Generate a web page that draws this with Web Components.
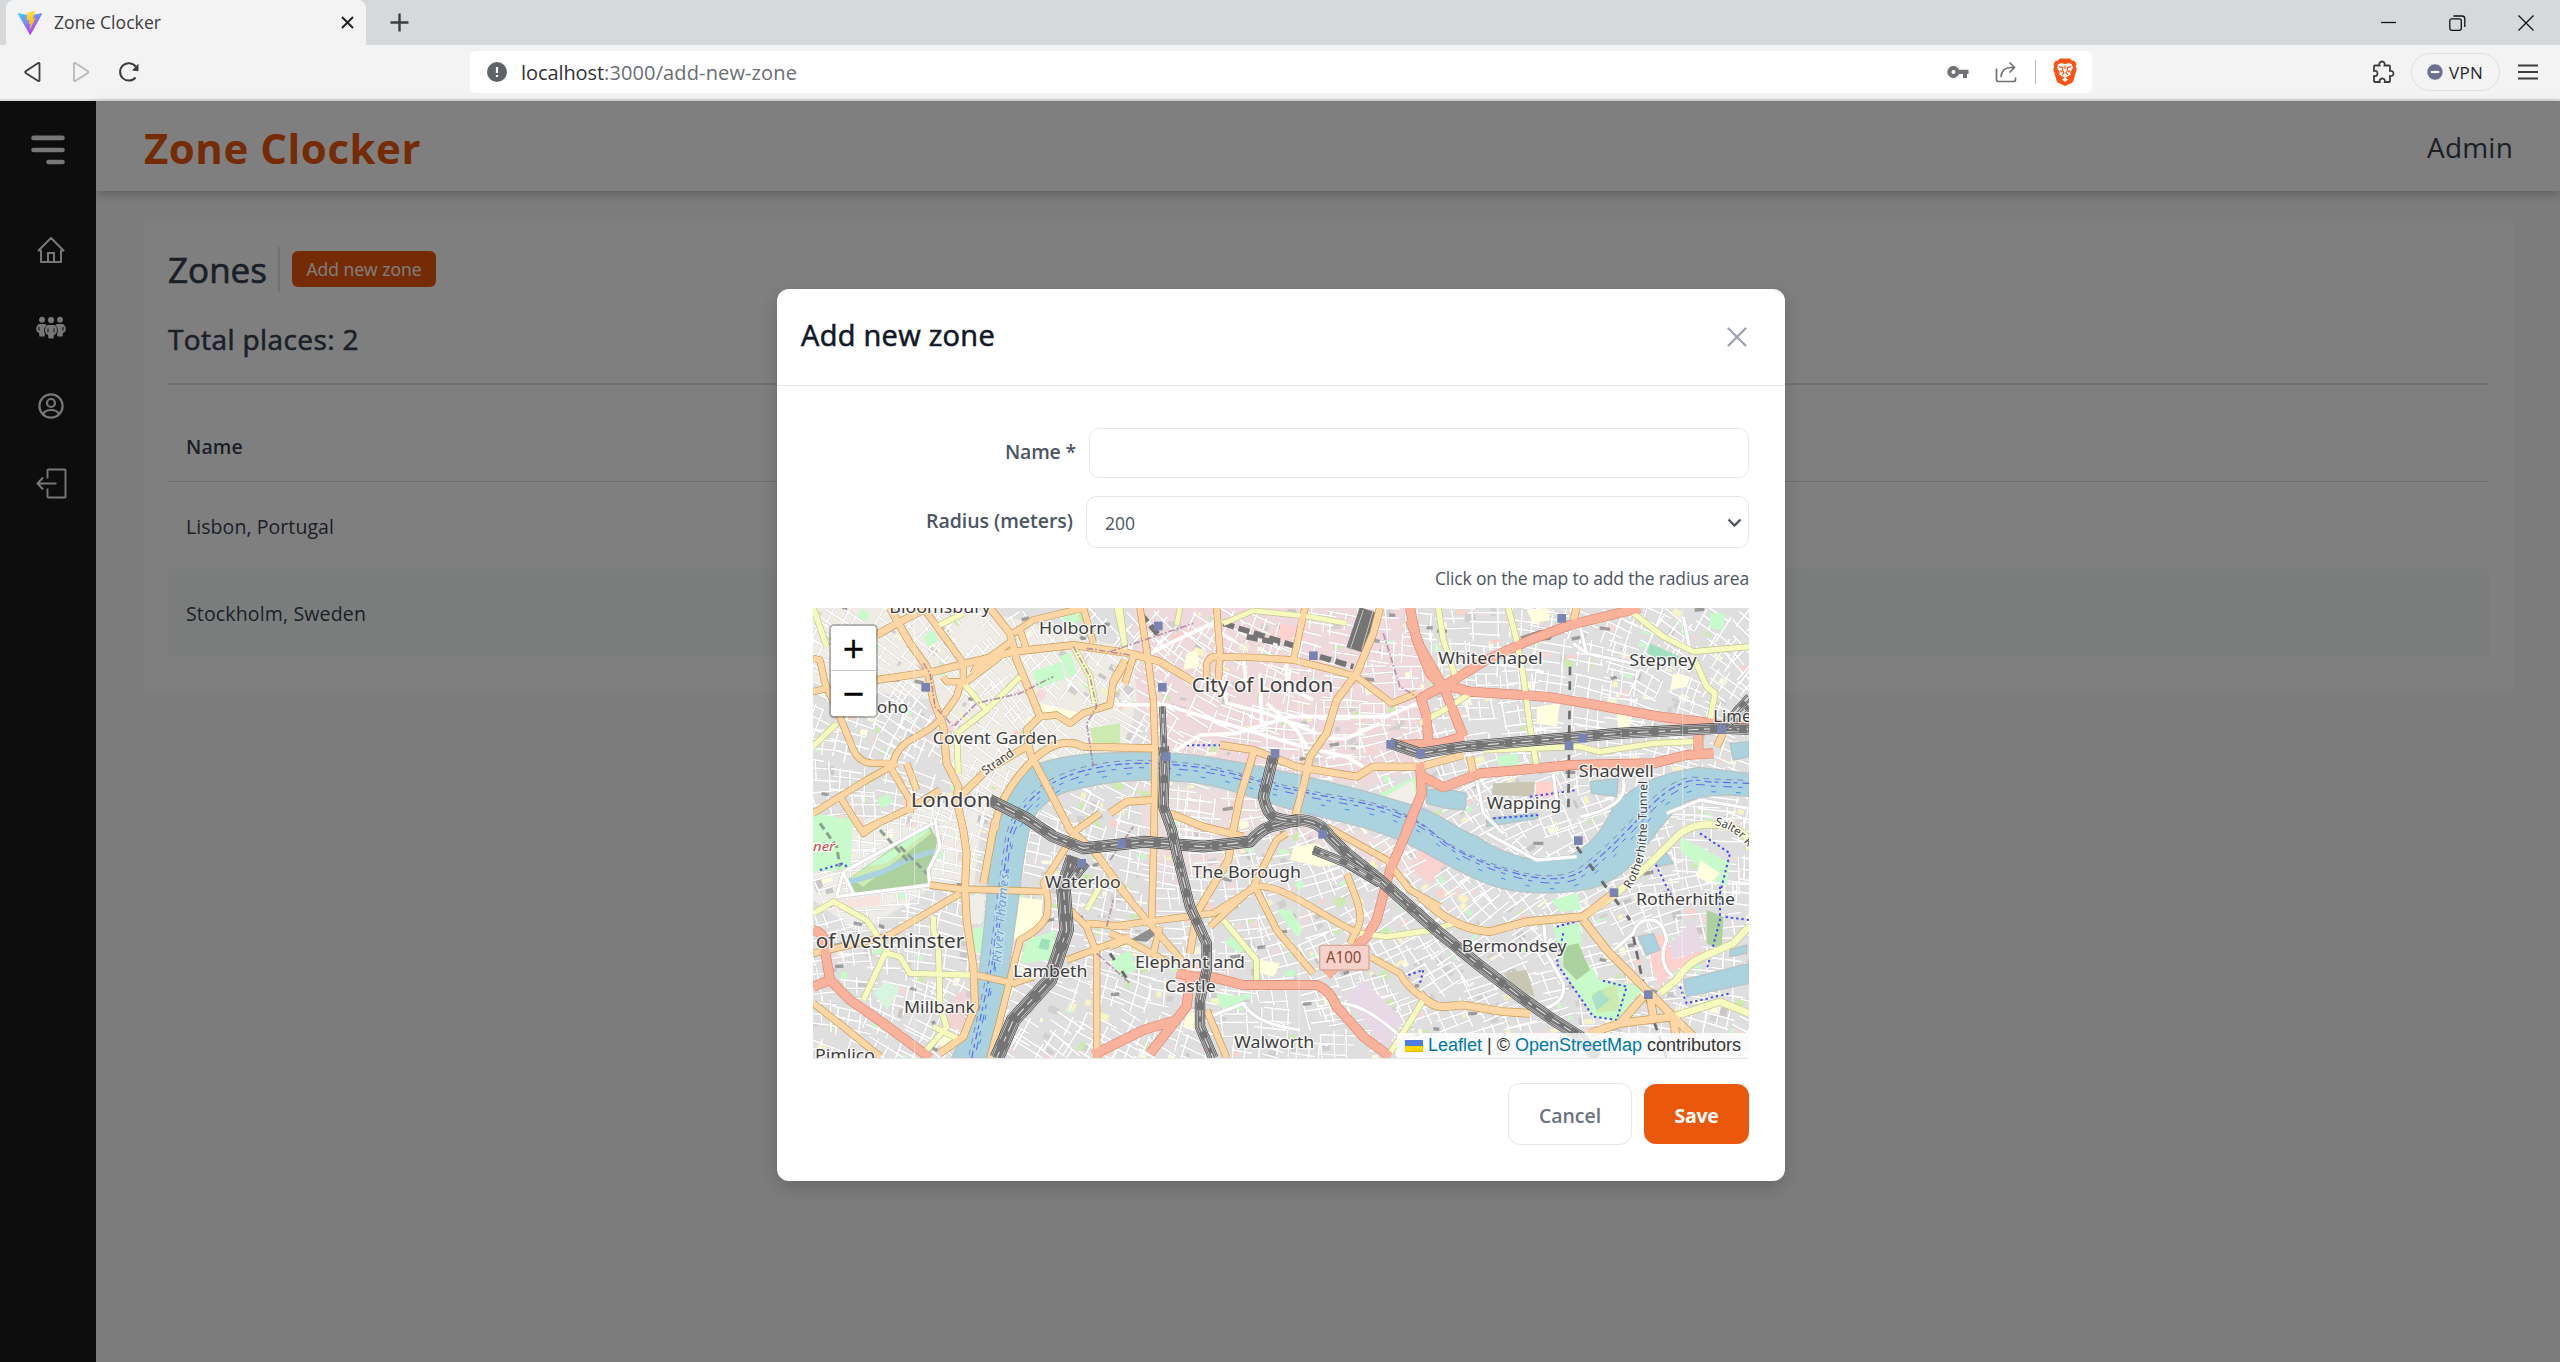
<!DOCTYPE html>
<html lang="en">
<head>
<meta charset="utf-8">
<title>Zone Clocker</title>
<style>
html,body{margin:0;height:100%;overflow:hidden}
body{font-family:"Open Sans","Noto Sans",sans-serif}
</style>
</head>
<body>
<zone-app></zone-app>
<script>
function define(name, html, setup) {
  const t = document.createElement('template');
  t.innerHTML = html;
  customElements.define(name, class extends HTMLElement {
    constructor() {
      super();
      this.attachShadow({mode: 'open'}).appendChild(t.content.cloneNode(true));
    }
    connectedCallback() { if (setup) setup.call(this); }
  });
}

/* Inline text that tracks its letters so the run takes exactly w pixels. */
const runs = [];
customElements.define('fit-text', class extends HTMLElement {
  connectedCallback() {
    if (this.shadowRoot) return;
    this.attachShadow({mode: 'open'}).innerHTML =
      '<style>:host{display:inline-block;white-space:pre;flex:none}</style><slot></slot>';
    runs.push(this);
  }
  fit() {
    const w = +this.getAttribute('w'), n = this.textContent.length;
    const d = (w - this.getBoundingClientRect().width) / n;
    this.style.letterSpacing = d.toFixed(3) + 'px';
    this.style.width = w + 'px';
  }
});

/* Icons: [width, height, markup], stroked or filled with currentColor */
const ICONS = {
  vite: [26, 26, '<defs><linearGradient id="a" x1="0" y1="0" x2=".6" y2="1"><stop offset="0" stop-color="#41d1ff"/><stop offset="1" stop-color="#bd34fe"/></linearGradient><linearGradient id="b" x1=".4" y1="0" x2=".6" y2="1"><stop offset="0" stop-color="#ffea83"/><stop offset=".1" stop-color="#ffdd35"/><stop offset="1" stop-color="#ffa800"/></linearGradient></defs><path d="M25 4.3 13.7 24.4q-.5.8-1 0L1 4.300q-.4-1 .7-1l11.400 2L24.300 3.300q1 0 .7 1z" fill="url(#a)"/><path d="m18.200.8-8 1.600-.5 8.200 2.600-.5-.7 4 2-.6-1.200 6 .8-.2 5.300-11-2.600.4z" fill="url(#b)"/>'],
  x: [13, 13, '<path d="m1 1 11 11M12 1 1 12" fill="none" stroke="currentColor" stroke-width="2"/>'],
  plus: [19, 19, '<path d="M9.500.5v18M.5 9.500h18" fill="none" stroke="currentColor" stroke-width="2.400"/>'],
  back: [18, 22, '<path d="M15.500 2.500v17q-.3 1-1.300.4L1.700 12q-1-.9 0-1.800L14.200 2q1-.5 1.300.5z" fill="none" stroke="currentColor" stroke-width="1.800"/>'],
  fwd: [18, 22, '<path d="M2 2.500v17q.3 1 1.300.4L15.800 12q1-.9 0-1.800L3.300 2Q2.300 1.500 2 2.500z" fill="none" stroke="currentColor" stroke-width="1.800"/>'],
  reload: [22, 22, '<path d="M17.500 16.500a8.700 8.700 0 1 1 .3-10.800" fill="none" stroke="currentColor" stroke-width="2"/><path d="M20.500 2.500v7q0 .8-.8.8L14 9.500z" fill="currentColor"/>'],
  info: [20, 20, '<circle cx="10" cy="10" r="10" fill="#5f6368"/><path d="M10 5v6M10 13v2" stroke="#fff" stroke-width="2.200"/>'],
  key: [22, 14, '<path fill-rule="evenodd" d="M6.500 1a6 6 0 1 0 5.400 8H16v4h4V9h1.500V4.800H11.900A6 6 0 0 0 6.500 1zm0 4a2 2 0 1 1 0 4 2 2 0 0 1 0-4z" fill="currentColor"/>'],
  share: [22, 22, '<path d="M1.500 7.500v11q0 2 2 2h15q2 0 2-2v-2" fill="none" stroke="currentColor" stroke-width="1.700"/><path d="M6 16c.5-6 4-9.500 10-9.500h3M14.500 1.500l5 5-5 5" fill="none" stroke="currentColor" stroke-width="1.700"/>'],
  brave: [24, 28, '<path d="M7 .5h10l2.200 2.300 2-.3L23.500 6l-.8 2 1 3-3.200 11.500q-.5 1.600-2 2.600L12 28l-6.500-2.900q-1.500-1-2-2.600L.3 11l1-3-.8-2 2.300-3.500 2 .3z" fill="#fb5414"/><path d="M12 6.200 15.500 5l3 1 1.500 3.500-2.700 4.800.4 2.200-4 2.500-1.700 1.300-1.700-1.300-4-2.500.4-2.200L4 9.500 5.500 6l3-1z" fill="#fff"/><path d="m6 8.700 3.800.9L9.500 12l1.500 3-2 1.800M18 8.700l-3.800.9.3 2.400-1.500 3 2 1.800M12 7.500V11M7 12.500l2 1.500M17 12.500 15 14" fill="none" stroke="#fb5414" stroke-width="1.200"/><path d="m9 21.500 3-1.700 3 1.700-3 2.500z" fill="#fff"/>'],
  puzzle: [24, 24, '<path d="M4 5.500h4.500c-.5-1.500 0-4 2.500-4s3 2.500 2.500 4H18q1 0 1 1v4.500c1.500-.5 3.500.2 3.500 2.500S20.500 16.500 19 16v5q0 1-1 1h-4.200c.5-1.700-.3-3.500-2.500-3.500S8.200 20.300 8.700 22H4q-1 0-1-1v-5c2 .4 3.500-.4 3.500-2.600S5 10.500 3 11V6.500q0-1 1-1z" fill="none" stroke="currentColor" stroke-width="1.800"/>'],
  vpn: [16, 16, '<circle cx="8" cy="8" r="7.700" fill="#6b7090"/><path d="M3.800 8h8.400" stroke="#fff" stroke-width="2.200"/>'],
  menu: [22, 16, '<path d="M1 1.500h20M1 8h20M1 14.500h20" stroke="currentColor" stroke-width="1.800"/>'],
  min: [16, 16, '<path d="M0 7.500h15" stroke="currentColor" stroke-width="1.300"/>'],
  restore: [17, 16, '<rect x=".8" y="3.800" width="11.500" height="11.500" rx="2" fill="none" stroke="currentColor" stroke-width="1.300"/><path d="M4.500 1h8.500q2.800 0 2.800 2.800V12" fill="none" stroke="currentColor" stroke-width="1.300"/>'],
  winx: [16, 16, '<path d="m.5.5 15 15m0-15-15 15" stroke="currentColor" stroke-width="1.300"/>'],
  burger: [34, 30, '<path d="M2.500 2.900h29M2.500 15h29M17.500 27h14" stroke="currentColor" stroke-width="4.600" stroke-linecap="round"/>'],
  home: [28, 28, '<path d="M1.500 14.500 14 2l12.500 12.500H24V26H4V14.500z" fill="none" stroke="currentColor" stroke-width="2" stroke-linejoin="round"/><path d="M11 26v-9h6v9" fill="none" stroke="currentColor" stroke-width="2"/>'],
  people: [30, 24, '<g fill="currentColor"><circle cx="6" cy="3.700" r="2.900"/><circle cx="24" cy="3.700" r="2.900"/><path d="M3 8h6q1.500.5 1.700 1.500C8 11 7.500 15 9 18l-.5 2.500H3.500L3 17Q0 16 .2 12.500T3 8zM27 8h-6q-1.500.5-1.700 1.500C22 11 22.500 15 21 18l.5 2.500h5L27 17q3-1 2.800-4.500T27 8z"/><circle cx="15" cy="4" r="3.100"/><path d="M12 9h6q3 1 3 5t-3 5l-.5 3.500h-5L12 19q-3-1-3-5t3-5z"/></g><path d="M3 11v3.500M27 11v3.500M12 12.500v4M18 12.500v4" stroke="#1a1a1a" stroke-width="1"/>'],
  user: [26, 26, '<g fill="none" stroke="currentColor" stroke-width="2.200"><circle cx="13" cy="13" r="11.600"/><circle cx="13" cy="10" r="4"/><path d="M5 21q2-4 8-4t8 4"/></g>'],
  exit: [31, 31, '<g fill="none" stroke="currentColor" stroke-width="1.900"><path d="M11.500 10.500V2.500q0-1 1-1h16q1 0 1 1v26q0 1-1 1h-16q-1 0-1-1v-8M20.500 15.500H1.500M7 9.500l-5.500 6 5.500 6"/></g>'],
  close: [20, 20, '<path d="m1.500 1.500 17 17m0-17-17 17" stroke="currentColor" stroke-width="2.300" stroke-linecap="round"/>'],
  chevron: [15, 10, '<path d="m1.500 1.500 6 6 6-6" fill="none" stroke="currentColor" stroke-width="2.400"/>'],
  flag: [18, 12, '<path d="M0 0h18v6H0z" fill="#4c7be1"/><path d="M0 6h18v6H0z" fill="#ffd500"/><path d="M0 11h18v1H0z" fill="#e0bc00"/>']
};
customElements.define('ui-icon', class extends HTMLElement {
  connectedCallback() {
    if (this.shadowRoot) return;
    const [w, h, m] = ICONS[this.getAttribute('name')];
    this.attachShadow({mode: 'open'}).innerHTML =
      `<style>:host{display:block;flex:none;width:${w}px;height:${h}px}svg{display:block}</style><svg width="${w}" height="${h}" viewBox="0 0 ${w} ${h}">${m}</svg>`;
  }
});

define('browser-chrome', `<style>
:host{display:block;background:#d5d9dc;height:101px;color:#3b3d40;flex:none}
.tabs{display:flex;height:45px;align-items:center}
.tab{display:flex;align-items:center;width:360px;height:45px;margin-left:6px;background:#f3f3f3;border-radius:8px 8px 0 0;box-sizing:border-box;padding:0 12px 0 11px}
.tab fit-text{margin-left:11px;font-size:17.500px;margin-top:-2px}
.tab ui-icon:last-child{margin-left:auto;color:#222}
.win{margin-left:auto;display:flex;gap:52px;padding-right:26px;color:#111}
.bar{display:flex;height:54px;align-items:center;background:#f3f3f3}
.url{display:flex;align-items:center;width:1622px;height:42px;margin-left:330px;background:#fff;border-radius:6px;box-sizing:border-box;padding:0 15px 0 17px}
.url fit-text{font-size:20px;color:#6b6e72}
.url fit-text:first-of-type{color:#303235;margin-left:14px}
.tools{margin-left:auto;display:flex;align-items:center;color:#6f7174}
.sep{width:1px;height:24px;background:#b9bcbf;margin:0 17px 0 18px}
.right{margin-left:auto;display:flex;align-items:center;padding-right:21px}
.vpn{display:flex;align-items:center;box-sizing:border-box;width:89px;height:38px;margin:0 17px 0 16px;border:1px solid #dfdfdf;border-radius:19px;padding-left:15px}
.vpn fit-text{margin-left:6px;font-size:17px;color:#26282b}
</style>
<div class="tabs"><div class="tab"><ui-icon name="vite"></ui-icon><fit-text w="107">Zone Clocker</fit-text><ui-icon name="x"></ui-icon></div>
<ui-icon name="plus" style="margin-left:24px"></ui-icon>
<div class="win"><ui-icon name="min"></ui-icon><ui-icon name="restore"></ui-icon><ui-icon name="winx"></ui-icon></div></div>
<div class="bar"><ui-icon name="back" style="margin-left:24px"></ui-icon><ui-icon name="fwd" style="margin-left:30px;color:#b9b9b9"></ui-icon><ui-icon name="reload" style="margin-left:28px"></ui-icon>
<div class="url"><ui-icon name="info"></ui-icon><fit-text w="83">localhost</fit-text><fit-text w="193">:3000/add-new-zone</fit-text>
<div class="tools"><ui-icon name="key"></ui-icon><ui-icon name="share" style="margin-left:26px"></ui-icon><span class="sep"></span><ui-icon name="brave"></ui-icon></div></div>
<div class="right"><ui-icon name="puzzle"></ui-icon><div class="vpn"><ui-icon name="vpn"></ui-icon><fit-text w="34">VPN</fit-text></div><ui-icon name="menu"></ui-icon></div></div>`);

define('side-nav', `<style>
:host{display:flex;flex-direction:column;width:96px;flex:none;background:#1a1a1a;color:#eee;box-sizing:border-box;padding-top:34px;align-items:center}
nav{display:flex;flex-direction:column;align-items:center;padding:71px 0 0 6px}
</style><ui-icon name="burger"></ui-icon><nav><ui-icon name="home"></ui-icon><ui-icon name="people" style="margin-top:52px"></ui-icon><ui-icon name="user" style="margin-top:53px"></ui-icon><ui-icon name="exit" style="margin-top:49px"></ui-icon></nav>`);

define('app-header', `<style>
:host{display:flex;height:90px;flex:none;align-items:center;justify-content:space-between;box-sizing:border-box;padding:0 47px 0 48px;background:#fff;box-shadow:0 3px 9px rgba(0,0,0,.24);color:#374151}
b{font-size:42px;line-height:60px;color:#ea580c;margin-top:3px}
span{font-size:28px;line-height:40px;margin-top:2px}
</style><b><fit-text w="277">Zone Clocker</fit-text></b><span><fit-text w="86">Admin</fit-text></span>`);

define('zones-card', `<style>
:host{display:block;height:471px;margin:30px 47px 0 48px;background:#fff;box-sizing:border-box;padding:26px 24px 0;color:#374151}
.title{display:flex;align-items:center;height:45px}
h1{font-size:35px;font-weight:500;margin:0;line-height:45px;-webkit-text-stroke:.7px}
.sep{width:2px;height:45px;background:#dee0e2;margin:0 12px 0 11px}
.btn{width:144px;height:36px;background:#ea580c;border-radius:6px;color:#fff;display:flex;align-items:center;justify-content:center;font-size:17.500px;margin-top:-1px}
h2{margin:27px 0 24px;font-size:28px;line-height:40px;font-weight:500;-webkit-text-stroke:.6px}
.line{height:2px;background:#dee0e2;margin-bottom:26px}
.cell{height:87px;padding:1px 0 0 18px;box-sizing:border-box;display:flex;align-items:center;font-size:19.500px}
.head{height:71px;border-bottom:1px solid #dbdddf;font-weight:600;padding-top:0}
.alt{background:#f7fbf9}
</style>
<div class="title"><h1><fit-text w="99">Zones</fit-text></h1><i class="sep"></i><div class="btn"><fit-text w="115">Add new zone</fit-text></div></div>
<h2><fit-text w="191">Total places: 2</fit-text></h2><div class="line"></div>
<div class="cell head"><fit-text w="57">Name</fit-text></div>
<div class="cell"><fit-text w="148">Lisbon, Portugal</fit-text></div>
<div class="cell alt"><fit-text w="180">Stockholm, Sweden</fit-text></div>`);

/* ---- map ---- */
/* Large land-use areas, below the side streets */
const LAND = [
 ['#f0d9dc','1000,24 1830,24 1890,250 1860,330 1870,500 1700,560 1060,450 1010,300'],
 ['#efece6','39,24 520,24 1000,150 1010,300 980,450 680,500 590,640 480,660 400,300 39,250'],
 ['#ecdedf','1000,550 1330,580 1580,660 1860,760 1900,860 1640,760 1400,700 1200,850 1060,820'],
 ['#efede8','39,700 560,560 520,870 400,860 180,1000 39,900'],
 ['#f9d3cf','1860,745 1935,790 1895,850 1830,810'],
 ['#fad5d2','370,430 470,360 490,400 440,430'],['#fbd0cb','1110,110 1170,80 1180,110 1120,140']
];
/* Parks, squares and yards, above the side streets */
const GREEN = [
 ['#efede5','460,90 520,50 570,110 480,170'],
 ['#c8facc','39,640 160,660 150,810 39,815'],['#c8facc','370,110 400,90 415,120 385,140'],
 ['#c8facc','700,215 780,185 795,235 715,265'],['#c8facc','780,40 825,24 840,60 800,80'],
 ['#c8facc','780,170 810,155 830,220 805,235'],['#cdebb0','870,385 960,370 960,430 880,440'],
 ['#c8facc','230,600 262,580 280,605 245,625'],['#d8f5df','220,1180 255,1145 300,1165 260,1230'],
 ['#acd09e','140,840 385,670 412,720 385,848 160,885'],['#cdebb0','150,835 380,680 395,700 190,860'],
 ['#c8facc','200,800 380,680 390,690 260,790'],['#f8e3de','130,900 240,885 240,915 150,925'],
 ['#efede8','510,885 555,885 550,965 512,975'],
 ['#c8facc','510,990 550,980 545,1060 515,1060'],['#c8facc','680,1020 770,990 750,1080 660,1090'],
 ['#9fe0b9','725,1015 750,1020 745,1050 715,1045'],
 ['#ffffe0','655,890 725,900 725,980 640,1020'],['#c8facc','930,1080 990,1050 1010,1110 960,1130'],
 ['#ffffe0','1160,160 1190,150 1200,200 1150,210'],['#ffffe0','1480,740 1550,730 1640,790 1560,800 1470,780'],
 ['#c8facc','1740,580 1845,530 1860,600 1790,620'],['#f2efe9','1755,590 1840,540 1850,620 1800,610'],
 ['#c8facc','1290,1010 1340,1040 1320,1060 1275,1030'],['#c8facc','1430,930 1470,930 1510,990 1490,1010'],
 ['#c8facc','1250,1180 1330,1190 1330,1230 1260,1220'],['#ffffe0','1380,1080 1440,1090 1420,1130 1380,1120'],
 ['#e9d8e6','1640,1190 1690,1140 1810,1260 1760,1350'],['#ffffe0','2210,320 2280,310 2270,380 2210,370'],
 ['#ffffe0','1160,1240 1200,1250 1190,1290 1150,1280'],
 ['#9fe0c0','2550,130 2640,170 2600,190 2540,160'],['#c8facc','2730,40 2775,40 2770,90 2730,85'],
 ['#c9c7b3','2080,550 2205,545 2200,590 2075,585'],['#ffd0cc','2210,545 2275,545 2275,590 2205,590'],
 ['#c8facc','2090,470 2150,460 2160,500 2100,500'],['#ffffe0','2180,30 2240,24 2250,60 2200,70'],
 ['#ffffe0','2620,220 2670,230 2660,260 2610,270'],['#ffffe0','2450,340 2490,330 2490,380 2455,390'],
 ['#c8facc','2255,900 2330,880 2345,930 2280,935'],['#c9c7b3','2110,1120 2180,1110 2205,1190 2150,1170'],
 ['#e9d8e6','2610,1030 2680,960 2710,1040 2620,1080'],
 ['#ffd0cc','2570,1000 2600,1010 2620,1080 2710,1050 2710,1080 2620,1110 2580,1160 2550,1080'],
 ['#c8facc','2640,710 2700,740 2790,790 2780,860 2740,840 2640,750'],['#ffffe0','2700,780 2760,820 2730,850 2690,830'],
 ['#acd09e','2720,930 2770,950 2765,1050 2720,1030'],
 ['#c8facc','2260,980 2340,970 2345,1060 2400,1140 2530,1160 2450,1265 2380,1250 2290,1110'],
 ['#acd09e','2290,1040 2335,1030 2370,1110 2330,1140 2290,1100'],['#cdebb0','2375,1180 2450,1150 2460,1230 2390,1240'],
 ['#aadfc8','2375,1190 2400,1170 2430,1200 2390,1230'],
 ['#ffd0cc','1440,70 1490,80 1470,130 1435,110'],['#f3d4d4','430,1280 470,1180 500,1170 490,1290'],
 ['#ffffe0','410,1320 460,1300 470,1330 430,1350'],['#ffffe0','720,310 800,330 850,340 800,370 730,350']
];
const WATER = [
 'M455,1374C480,1320 500,1290 515,1240L535,1140 555,960 572,760 600,640C625,560 660,520 720,490C800,462 900,455 1060,458C1200,458 1330,490 1500,525L1700,575 1870,625C1930,650 1960,680 2030,710C2120,770 2230,800 2300,770C2370,740 2410,690 2440,620C2490,560 2570,520 2700,502L2847,520V590C2780,580 2700,585 2650,610C2600,650 2570,700 2520,760C2480,820 2420,860 2340,872C2240,885 2130,880 2060,850C1980,820 1900,770 1850,745C1760,700 1690,680 1580,655C1400,620 1300,555 1150,545C1000,530 900,550 800,575C740,595 700,640 690,680L672,770 650,940 620,1150 595,1290 575,1374Z',
 'M1880,570 1930,565 2000,580 1995,630 1940,625 1880,610ZM1880,520 1900,540 1870,580ZM2370,545 2455,535 2450,590 2375,580Z',
 'M2650,1140 2847,1090V1150L2660,1190ZM2515,1010 2560,1000 2580,1050 2540,1065ZM2560,780 2600,760 2620,790 2575,800ZM2790,430 2847,425V470L2800,480Z',
 'M2790,1050 2840,1035 2840,1060 2790,1070ZM2060,655 2210,640 2215,655 2060,680Z'
];
const O='o',R='r',Y='y';
const ROADS = [
 [Y,16,'M40,24 80,140M960,24 975,150M820,140 870,230 885,310M39,440 110,370M410,80 490,40M490,250 560,330 660,230M560,330 470,400 475,520'],
 [Y,14,'M1270,70 1360,32 1530,50 1640,70M950,24 975,140M1140,24 1130,75'],
 [Y,16,'M1915,24 1930,120 1970,240M2125,24 2150,120 2170,230 2190,380 2210,500M2500,40 2590,110 2680,155 2847,140M2680,170 2720,260 2745,280 2730,360M1860,370 1950,320 2010,280M2050,450 2340,440 2400,455 2560,430 2680,425'],
 [Y,16,'M40,940 100,905 200,960 260,1050 190,1200M260,1060 300,1070 330,1120 510,1125M400,950V990L415,1030 420,1220 440,1280 380,1350M400,1280 480,1320M910,840 860,930'],
 [Y,16,'M1270,960 1370,1080V1140M1680,1000 1760,1010 1900,990 1960,970M1870,1200 1770,1360'],
 [Y,20,'M2350,950 2450,880 2550,790 2640,700Q2700,660 2780,680T2847,750M2580,1180 2630,1140Q2660,1090 2710,1070L2800,1030 2847,980M2620,1250 2760,1205 2847,1240'],
 [O,18,'M39,175 60,180 75,250 120,350 160,450Q180,490 220,490L280,490Q290,440 340,415T420,360L470,290 485,240M39,640 200,540 290,490M39,275 80,265M120,590 190,700 240,665M270,500 330,600V640M190,690 330,625 420,570M320,490 350,570'],
 [O,20,'M230,240 400,215 520,185 640,155 820,135 990,160 1080,185 1180,245M230,105 300,65 370,30M270,24 330,130 380,200 400,300 430,380 440,490 475,560 470,600 490,690 500,760 495,860 500,960 520,1100 525,1220 490,1310 420,1360'],
 [O,18,'M370,24 440,120 490,190V240M430,230 440,245 500,245 600,170M520,220 530,200 640,120M640,100 700,60 850,24M850,24 880,130M660,90 680,150M720,350 770,345 810,370 850,340 930,315 940,240 975,180M975,250 1000,170'],
 [O,20,'M570,24 630,100 650,180 700,300 720,350 680,390 690,460 810,690 880,750 990,900M585,690Q590,600 680,500T850,440L1060,445M585,660 550,850M480,590 560,510 680,440'],
 [O,18,'M1020,24 1040,150 1060,300 1065,440 1062,700 1055,960M1250,24 1260,160 1255,240M1220,240V190Q1230,165 1260,170L1350,172 1480,180 1580,205 1670,230 1775,310 1850,280M1515,24 1480,180M940,250 975,190'],
 [O,20,'M1740,24 1720,100 1670,220 1610,300 1580,400 1530,470 1510,560 1485,650M1260,435 1360,450 1490,500 1670,530 1720,500 1860,500 1990,465M1360,460 1320,590 1300,690 1285,780 1190,940 1170,1060M930,640 980,605 1060,600M1110,640 1210,680 1330,710M2010,470 2020,520M2330,24 2320,60M2770,400 2750,440'],
 [O,18,'M40,1060 260,1010 430,910 480,880M390,855 480,867 740,875M900,640 830,690 780,770 730,850Q750,890 740,950Q720,990 660,1020L630,1140 600,1260 570,1374M530,1125 640,1150 700,1130M810,930 860,980 890,1060V1374M800,1080 990,1010M860,970 990,980M40,1210 130,1280 240,1370'],
 [O,18,'M930,830 1040,960 1110,1040 1170,1110M930,980 1040,965 1240,940 1370,860M930,1000 980,1020 1110,1090M930,1040 980,1020M1080,980 1060,1060M1230,980 1360,860 1430,720 1460,700M1370,860Q1420,850 1550,930T1670,990Q1690,960 1670,900L1640,820M1370,870 1430,990 1540,1120M1670,990 1650,1030M1710,1070 1800,1120Q1830,1180 1920,1220M1580,680 1760,780 1830,870 1920,920M1220,1230 1280,1374'],
 [O,22,'M1860,890 1920,940Q1990,990 2070,995L2180,965 2350,950 2440,880M2350,960 2420,1050 2550,1180 2680,1310M1860,1180Q1890,1220 1930,1220L1990,1215 2110,1235 2190,1240M2370,1300 2460,1270 2620,1250M2460,1270 2530,1190M2550,1190 2560,1250M2620,1260 2630,1320'],
 [R,26,'M1830,24 1850,120 1890,220 1935,270 1990,410M1860,140 1830,60M1860,295 1935,255 2060,180 2190,120 2310,75 2520,24M1935,255 2010,275 2240,290 2360,310 2580,350 2740,370 2847,382M1860,140 1935,270M1860,285 1880,350 1885,430M1800,435 1920,430 1990,410M1860,490 1865,580 1820,690 1835,660 1770,810 1730,960 1700,1010 1580,1125M1870,530 1930,562 2040,520 2160,510 2310,495 2560,490 2660,465 2740,460M2695,450V380'],
 [R,26,'M1130,1120 1180,1130 1230,1130 1330,1155 1470,1155H1550Q1590,1170 1610,1220L1690,1310 1770,1370M1170,1140 1160,1220 1050,1360M1130,1260 1030,1290 880,1365M40,990Q80,1000 75,1050L90,1140 150,1200 250,1270 390,1374M40,1160 90,1140']
];
const RAILS = [
 [26,'M570,600 680,655 760,710 850,745 990,730 1030,725 1210,740 1350,725Q1380,690 1410,680L1490,660Q1560,660 1590,710L1640,760 1740,840 1920,1000 2030,1090 2160,1190 2260,1260 2340,1310 2390,1374'],
 [18,'M1540,750 1640,790 1740,850'],
 [22,'M1090,440 1095,470 1090,620 1115,690 1130,760 1170,920 1220,1030V1110L1200,1200V1280L1240,1374'],
 [10,'M1087,320 1092,440'],
 [24,'M1420,470 1390,590Q1400,640 1420,650T1500,665'],
 [34,'M820,770 790,860 800,990 750,1140 640,1260 590,1374'],[14,'M860,790 810,850M840,800 800,860'],
 [24,'M1770,430 1860,460 1990,440 2460,400 2760,385 2847,388'],[12,'M2760,385 2847,290M2770,385 2847,320']
];
/* text, x, baseline, width, size */
const LABELS = [
 ['Bloomsbury',268,40,304,50],['Holborn',717,103,205,50],['oho',230,338,95,50],['Covent Garden',398,433,374,50],
 ['London',332,622,240,62],['City of London',1175,275,425,62],['Whitechapel',1915,193,313,50],['Stepney',2488,197,202,50],
 ['Lime',2740,367,114,50],['Shadwell',2336,532,226,50],['Wapping',2060,628,224,50],['Waterloo',735,865,227,50],
 ['of Westminster',47,1045,446,62],['Lambeth',640,1132,222,50],['Millbank',312,1240,213,50],['Pimlico',45,1384,180,50],
 ['The Borough',1177,835,326,50],['Elephant and',1005,1105,330,50],['Castle',1095,1175,152,50],['Walworth',1303,1345,240,50],
 ['Bermondsey',1985,1055,315,50],['Rotherhithe',2508,915,297,50]
];
const STATIONS = [[377,262],[1075,78],[1087,262],[1098,470],[1425,460],[1540,167],[1772,433],[1862,460],[2285,55],[2348,415],[2307,437],[2765,388],[965,730],[845,790],[1568,703],[2335,722],[2442,878],[2545,1184]];

function drawMap() {
  let seed = 7;
  const rnd = () => (seed = (seed * 16807) % 2147483647) / 2147483647;
  const ln = (d, c, w, x = '') => `<path d="${d}" stroke="${c}" stroke-width="${w}" ${x}/>`;
  const poly = ([c, p]) => `<polygon points="${p}" fill="${c}"/>`;
  let blocks = '', streets = '', patches = '';
  const tints = ['#c8facc','#ffffe0','#cdebb0','#f2dad9','#d2cfcf','#d2cfcf','#c8c6c6','#fbd3cd','#f7f4c8'];
  for (let i = 0; i < 950; i++) {
    const x = rnd() * 2808 + 39, y = rnd() * 1350 + 24, a = Math.sin(x / 400) * 25 + Math.cos(y / 260) * 20;
    blocks += `<rect x="${x | 0}" y="${y | 0}" width="${8 + rnd() * 26 | 0}" height="${7 + rnd() * 22 | 0}" fill="${tints[rnd() * tints.length | 0]}" transform="rotate(${a | 0} ${x | 0} ${y | 0})"/>`;
  }
  /* side streets: short jittered lines following the bearing of each district */
  for (let gy = 0; gy < 1400; gy += 92) for (let gx = 0; gx < 2860; gx += 104) {
    const cx = gx + rnd() * 50, cy = gy + rnd() * 40;
    const a = (Math.sin(gx / 400) * 25 + Math.cos(gy / 260) * 20 + rnd() * 14) * Math.PI / 180;
    const c = Math.cos(a), s = Math.sin(a);
    const p = (u, v) => `${cx + u * c - v * s | 0},${cy + u * s + v * c | 0}`;
    for (let k = 0; k < 3; k++) {
      const v = k * 31 + rnd() * 12, u = k * 38 + rnd() * 14;
      streets += `M${p(-15 + rnd() * 30, v)}L${p(70 + rnd() * 60, v + rnd() * 8)}`;
      if (rnd() < .85) streets += `M${p(u, -10 + rnd() * 25)}L${p(u + rnd() * 8, 55 + rnd() * 50)}`;
    }
  }
  for (let i = 0; i < 70; i++) {
    const x = rnd() * 2800 | 0, y = rnd() * 1350 | 0;
    patches += `M${x},${y}l${10 + rnd() * 22 | 0},${-8 + rnd() * 16 | 0}`;
  }
  const fill = {o: '#fcd6a4', r: '#f9b29c', y: '#f7fabf'}, edge = {o: '#c79a55', r: '#dc8670', y: '#c3c590'};
  const river = 'M515,1374 575,1100 600,900 625,720Q650,620 740,560T1000,490Q1200,490 1330,530T1640,600T1900,700T2130,815T2350,810T2530,640T2720,545L2847,550';
  const lanes = 'M110,890 130,815 400,670M110,890 390,855M130,820 160,880M405,660 420,740 385,810 390,860M1230,1250 1330,1210Q1360,1270 1500,1290M1620,1210Q1690,1210 1790,1300M2430,1060 2500,1000Q2510,960 2550,960T2600,1020Q2570,1090 2620,1130M2230,960 2240,1060 2290,1150Q2300,1210 2220,1230M2030,540 2050,640 2110,700M2260,520 2270,600M2470,540Q2490,620 2340,650M2320,130 2360,160 2500,190M2340,80 2360,160M2650,50 2670,150M2600,640 2700,600 2847,625M2060,700 2210,780 2330,770';
  return `<svg viewBox="39 24 2808 1350" width="936" height="450" fill="none" stroke-linejoin="round">
  <rect x="39" y="24" width="2808" height="1350" fill="#e0dfdf"/>${LAND.map(poly).join('')}${blocks}
  ${ln(streets, '#cfcccc', 7)}${ln(streets, '#fff', 5)}${ln(patches, '#777', 10, 'opacity=".65"')}
  ${GREEN.map(poly).join('')}
  ${ln('M150,845 250,815 330,775 395,755', '#aad3df', 17, 'stroke-linecap="round"')}
  ${ln('M60,670 110,740 120,800M300,740 390,830M240,690 330,790', '#8fa08f', 9, 'stroke-dasharray="22 12"')}
  <path d="${WATER.join('')}" fill="#aad3df" stroke="#b9c3c4" stroke-width="4"/>
  ${ln(river, '#5d67f0', 3.5, 'stroke-dasharray="22 9 12 14"')}
  ${ln(river, '#5d67f0', 3, 'stroke-dasharray="14 24 26 18" transform="translate(6 13)"')}
  ${ln(river, '#7c76b8', 2.5, 'stroke-dasharray="18 16" transform="translate(-8 -9)"')}
  ${ln(river, '#3f8ff0', 3, 'stroke-dasharray="14 60" transform="translate(8 30)"')}
  ${ln('M2290,1000 2270,1090 2380,1250 2450,1260 2480,1160 2400,1140M2270,980 2345,960M2560,780 2620,900M2640,1160 2660,1210 2790,1180M2760,860V960L2720,1110M2847,960 2770,950M2190,590 2330,570M2080,655 2220,645M2700,700 2790,760 2760,880M60,810 130,790 150,810M1160,436H1270M1810,1130 1870,1110 1860,1150', '#4448f0', 6, 'stroke-dasharray="7 9"')}
  ${ln('M930,314 1100,315 1210,350 1340,390 1510,440 1640,470 1690,500M1050,160 1130,120 1260,60M1270,240 1280,310 1400,340 1550,400M1130,450 1200,405 1310,400 1470,350 1760,350 1850,310M1400,310 1490,390 1520,440M1560,415 1640,415 1740,370M1380,220 1385,380M1460,190V260L1540,300M1330,170 1340,270', '#fff', 11)}
  ${ln(lanes, '#c9c6c6', 13)}${ln(lanes, '#fff', 10)}
  ${ln('M2310,200 2305,640M2500,1010 2540,1200 2600,1374', '#6c6c6c', 8, 'stroke-dasharray="26 18"')}
  ${ln('M2330,740 2490,960M930,1060 990,1150', '#6c6c6c', 9, 'stroke-dasharray="24 40"')}
  ${ln('M1270,70 1490,140M1340,110 1440,130M1560,170 1660,200M1020,40 1080,110', '#747474', 17, 'stroke-dasharray="34 14"')}
  ${ln('M1705,30 1665,150', '#757575', 54)}${ln('M1690,30 1650,150M1720,30 1685,150', '#c7c7c7', 3)}
  <path d="M990,1020 1060,980 1070,1000 1040,1025ZM2160,110 2220,90 2270,95 2250,120 2180,125Z" fill="#8f8f8f"/>
  ${ROADS.map(([k, w, d]) => ln(d, edge[k], w + 4)).join('')}
  ${ROADS.map(([k, w, d]) => ln(d, fill[k], w)).join('')}
  ${ln('M370,190 390,220 405,320 460,380 530,310 660,280 760,230M820,140 870,230 890,320 860,370 880,500M860,145 990,165M930,155 1180,70M1750,100 1800,260 1850,290M930,780 1000,680M890,1060 990,1150M920,980 940,900', '#a4789e', 5, 'stroke-dasharray="20 6 5 6" opacity=".75"')}
  ${RAILS.map(([w, d]) => ln(d, '#444', w + 9) + ln(d, '#c4c4c4', w + 5) + ln(d, '#666', w) + ln(d, '#cfcfcf', w - 5) + ln(d, '#747474', Math.max(w - 9, 3)) + ln(d, '#dcdcdc', 3.5, 'stroke-dasharray="34 16"') + ln(d, '#747474', w, 'stroke-dasharray="22 66"')).join('')}
  ${STATIONS.map(([x, y]) => `<rect x="${x - 13}" y="${y - 13}" width="26" height="26" fill="#7a84b3"/>`).join('')}
  <path d="M344,24V1374M1497,24V1374M2648,24V1374" stroke="#fff" stroke-width="2" opacity=".7"/>
  <g font-family="Noto Sans" paint-order="stroke" stroke="#fff" stroke-opacity=".75" stroke-width="8" fill="#3f3f3f">
  ${LABELS.map(([t, x, y, w, s]) => `<text x="${x}" y="${y}" font-size="${s}" textLength="${w}" lengthAdjust="spacingAndGlyphs">${t}</text>`).join('')}
  <text x="39" y="752" font-size="38" textLength="66" lengthAdjust="spacingAndGlyphs" font-style="italic" fill="#d0494a">ner</text>
  <text transform="translate(556 526) rotate(-35)" font-size="36" textLength="108">Strand</text>
  <text transform="translate(603 1088) rotate(-85)" font-size="38" font-style="italic" textLength="268" fill="#6b9fd0" stroke="#d5e9f0">River Thames</text>
  <path id="tun" d="M2490,868Q2535,800 2540,700L2542,530" stroke="none" fill="none"/>
  <text font-size="36"><textPath href="#tun" textLength="335">Rotherhithe Tunnel</textPath></text>
  <path id="sal" d="M2744,675Q2820,690 2860,770" stroke="none" fill="none"/>
  <text font-size="34"><textPath href="#sal">Salter Rd</textPath></text>
  </g>
  <rect x="1559" y="1036" width="148" height="74" rx="6" fill="#f5d3cc" stroke="#d9a893" stroke-width="4"/>
  <text x="1578" y="1090" font-family="Noto Sans" font-size="46" textLength="106" lengthAdjust="spacingAndGlyphs" fill="#8a4a33">A100</text>
  </svg>`;
}
define('zone-map', `<style>
:host{display:block;position:relative;width:936px;height:450px;overflow:hidden;border-bottom:1px solid #e5e7eb}
#m svg{display:block}
.zoom{position:absolute;left:16px;top:16px;border:2px solid rgba(0,0,0,.25);border-radius:5px;background-clip:padding-box;background-color:#fff;width:45px}
.zoom span{display:flex;height:45px;align-items:center;justify-content:center;font:28px/45px "DejaVu Sans",sans-serif;color:#000;-webkit-text-stroke:.5px #000}
.zoom span:first-child{height:44px;border-bottom:1px solid #ccc}
.attr{position:absolute;right:0;bottom:0;height:25px;width:352px;box-sizing:border-box;padding-left:8px;background:rgba(255,255,255,.8);display:flex;align-items:center;font:18px/25px "Liberation Sans",Arial,sans-serif;color:#333}
a{color:#0078a8}.attr ui-icon{margin-right:5px}
</style><div id="m"></div><div class="zoom"><span>+</span><span>−</span></div>
<div class="attr"><ui-icon name="flag"></ui-icon><fit-text w="313"><a>Leaflet</a> | © <a>OpenStreetMap</a> contributors</fit-text></div>`,
function () { this.shadowRoot.getElementById('m').innerHTML = drawMap(); });

define('form-row', `<style>
:host{display:flex;justify-content:flex-end;align-items:center;color:#4b5563}
label{font-size:19.500px;font-weight:600;margin-top:-3px}
.field{box-sizing:border-box;border:1px solid #e5e7eb;border-radius:10px;display:flex;align-items:center;justify-content:space-between;padding:1px 6px 0 18px;font-size:17.500px}
</style><label><slot name="label"></slot></label><div class="field"><slot></slot></div>`,
function () {
  const f = this.shadowRoot.querySelector('.field');
  f.style.width = this.getAttribute('fw') + 'px';
  f.style.height = this.getAttribute('fh') + 'px';
  f.style.marginLeft = this.getAttribute('gap') + 'px';
});

define('ui-button', `<style>
:host{display:flex;align-items:center;justify-content:center;box-sizing:border-box;width:124px;height:62px;border:1px solid #e5e7eb;border-radius:12px;color:#6b7280;font-size:19.500px;font-weight:600;padding-top:2px}
:host([primary]){width:105px;height:60px;border:0;background:#ea580c;color:#fff;font-weight:700}
</style><slot></slot>`);

define('modal-dialog', `<style>
:host{display:block;width:1008px;height:892px;background:#fff;border-radius:12px;box-shadow:0 6px 18px rgba(0,0,0,.16);box-sizing:border-box}
header{display:flex;justify-content:space-between;align-items:center;height:97px;box-sizing:border-box;border-bottom:1px solid #e5e7eb;padding:0 38px 2px 24px}
h2{margin:-2px 0 0;font-size:29px;line-height:40px;font-weight:500;color:#111827;-webkit-text-stroke:.6px}
header ui-icon{color:#9ca3af;margin-top:2px}
main{padding:42px 36px 0}
.hint{display:flex;justify-content:flex-end;font-size:17.500px;line-height:26px;color:#4b5563;margin:17px 0}
footer{display:flex;justify-content:flex-end;align-items:center;gap:12px;margin-top:24px}
</style><header><h2><fit-text w="194">Add new zone</fit-text></h2><ui-icon name="close"></ui-icon></header>
<main><form-row fw="660" fh="50" gap="13"><fit-text slot="label" w="71">Name *</fit-text></form-row>
<form-row fw="663" fh="52" gap="13" style="margin-top:18px"><fit-text slot="label" w="147">Radius (meters)</fit-text><fit-text w="30">200</fit-text><ui-icon name="chevron"></ui-icon></form-row>
<div class="hint"><fit-text w="314">Click on the map to add the radius area</fit-text></div>
<zone-map></zone-map>
<footer><ui-button><fit-text w="62">Cancel</fit-text></ui-button><ui-button primary><fit-text w="44">Save</fit-text></ui-button></footer></main>`);

define('zone-app', `<style>
:host{display:flex;flex-direction:column;width:2560px;height:1362px}
.page{position:relative;display:flex;flex:1;background:#f8f8f8}
.content{flex:1}
.overlay{position:absolute;inset:0;background:rgba(0,0,0,.5);display:flex;justify-content:center;align-items:flex-start;padding:188px 0 0 2px;box-sizing:border-box}
</style><browser-chrome></browser-chrome><div class="page"><side-nav></side-nav><div class="content"><app-header></app-header><zones-card></zones-card></div>
<div class="overlay"><modal-dialog></modal-dialog></div></div>`);
runs.forEach(r => r.fit());
</script>
</body>
</html>
